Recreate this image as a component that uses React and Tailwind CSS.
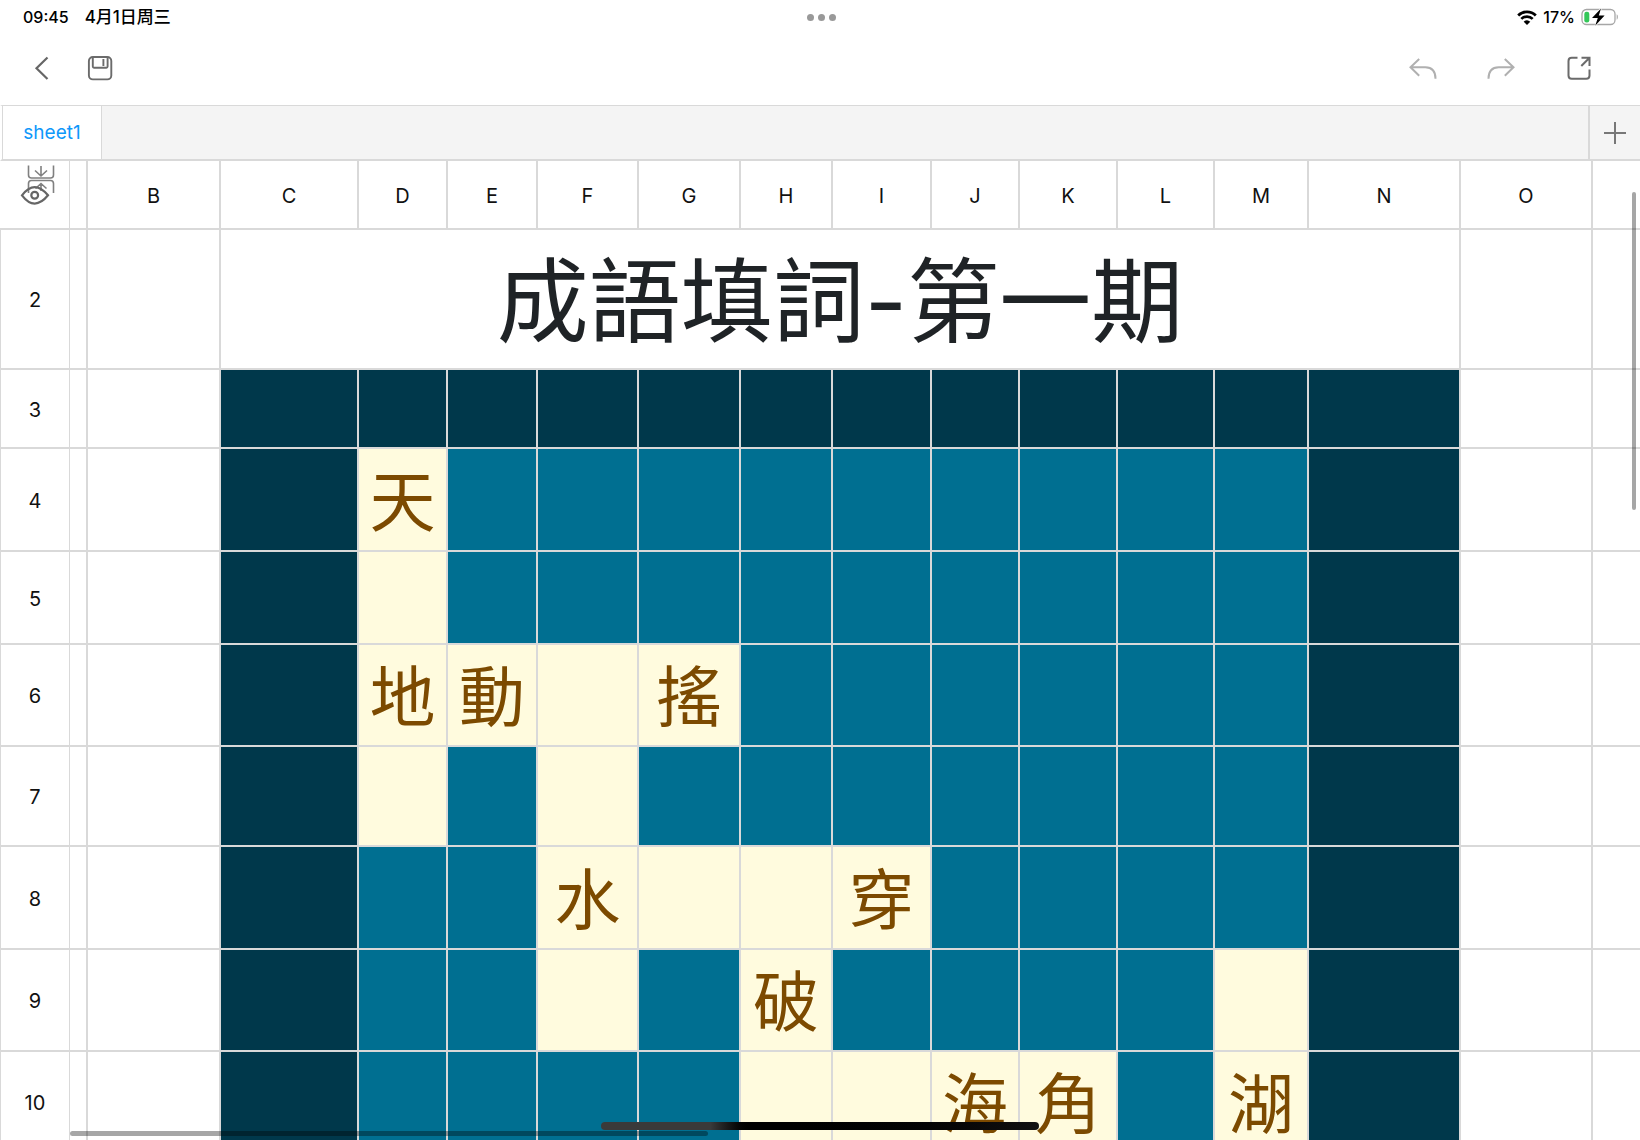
import React from "react";

const columns = [
  { name: "B", width: "w-[133px]" },
  { name: "C", width: "w-[138px]" },
  { name: "D", width: "w-[89px]" },
  { name: "E", width: "w-[90px]" },
  { name: "F", width: "w-[101px]" },
  { name: "G", width: "w-[102px]" },
  { name: "H", width: "w-[92px]" },
  { name: "I", width: "w-[99px]" },
  { name: "J", width: "w-[88px]" },
  { name: "K", width: "w-[98px]" },
  { name: "L", width: "w-[97px]" },
  { name: "M", width: "w-[94px]" },
  { name: "N", width: "w-[152px]" },
  { name: "O", width: "w-[132px]" },
];

// One entry per column C to N: "#" frame, "." board, "_" blank answer, any other character is a clue.
const rows = [
  { n: 3, height: "h-[79px]", cells: "############" },
  { n: 4, height: "h-[103px]", cells: "#天.........#" },
  { n: 5, height: "h-[93px]", cells: "#_.........#" },
  { n: 6, height: "h-[102px]", cells: "#地動_搖......#" },
  { n: 7, height: "h-[100px]", cells: "#_._.......#" },
  { n: 8, height: "h-[103px]", cells: "#..水__穿....#" },
  { n: 9, height: "h-[102px]", cells: "#.._.破...._#" },
  { n: 10, height: "h-[102px]", cells: "#....__海角.湖#" },
];

const frame = "border-b-2 border-[#d9d9d9] px-0 pb-0 pt-0.5";
const line = "border-r-2 border-b-2 border-[#d9d9d9] px-0 pb-0";

function fill(ch) {
  if (ch === "#") return "bg-[#00384b]";
  if (ch === ".") return "bg-[#006f91]";
  return "bg-[#fffbde]";
}

function StatusBar() {
  return (
    <div className="grid h-8 shrink-0 grid-cols-3 items-center pt-0.5 pr-[21px] pl-[23px] text-base font-medium text-black">
      <div className="flex items-center gap-4">
        <span>09:45</span>
        <span className="text-[17px] leading-6">4月1日周三</span>
      </div>
      <div className="flex justify-center gap-1">
        <span className="size-[7px] rounded-full bg-[#999]" />
        <span className="size-[7px] rounded-full bg-[#999]" />
        <span className="size-[7px] rounded-full bg-[#999]" />
      </div>
      <div className="flex items-center justify-end gap-1.5">
        <svg width="20" height="15" viewBox="0 0 20 15" fill="none" stroke="#000" aria-hidden="true">
          <path d="M1.2 5.4a12.6 12.6 0 0 1 17.6 0" strokeWidth="2.8" />
          <path d="M4.3 8.9a8.2 8.2 0 0 1 11.4 0" strokeWidth="2.7" />
          <path d="M10 15 6.7 11.7a4.8 4.8 0 0 1 6.6 0Z" fill="#000" stroke="none" />
        </svg>
        <span>17%</span>
        <svg width="38" height="18" viewBox="0 0 38 18" fill="none" aria-hidden="true">
          <rect x="1" y="1.5" width="33" height="15" rx="4.5" stroke="#a6a6a6" strokeWidth="1.3" />
          <path d="M35.7 6.3c1.6.9 1.6 4.5 0 5.4Z" fill="#a6a6a6" />
          <rect x="3.3" y="3.7" width="5" height="10.8" rx="2.2" fill="#34c759" />
          <path d="M20 .6 11 10h5.8l-2.6 7.8 9.4-10.2h-5.8Z" fill="#000" stroke="#fff" strokeWidth="1.4" paintOrder="stroke" />
        </svg>
      </div>
    </div>
  );
}

function Toolbar() {
  return (
    <div className="mb-px flex h-[72px] shrink-0 items-center justify-between pr-[46px] pl-7">
      <div className="flex gap-7">
        <button type="button" aria-label="返回">
          <svg width="30" height="30" viewBox="0 0 30 30" fill="none" stroke="#666" strokeWidth="2.2">
            <path d="M19.5 4.5 8.500 15.2l11 10.800" />
          </svg>
        </button>
        <button type="button" aria-label="保存">
          <svg width="30" height="30" viewBox="0 0 30 30" fill="none" stroke="#6b6b6b" strokeWidth="1.9">
            <rect x="2.9" y="4" width="22.4" height="22.4" rx="4" />
            <path d="M6.8 4v9.6q0 1.2 1.2 1.2h12.4q1.2 0 1.2-1.2V4M17.4 6v7" />
          </svg>
        </button>
      </div>
      <div className="flex gap-12">
        <button type="button" aria-label="撤销">
          <svg width="30" height="30" viewBox="0 0 30 30" fill="none" stroke="#b0b0b0" strokeWidth="2">
            <path d="M11.2 6 2.500 14.300l8.700 8.400M2.800 14.300h14.500c7 0 10.200 4 10.200 11.500" />
          </svg>
        </button>
        <button type="button" aria-label="重做">
          <svg width="30" height="30" viewBox="0 0 30 30" fill="none" stroke="#b0b0b0" strokeWidth="2">
            <path d="m18.800 6 8.700 8.300-8.700 8.400M27.200 14.300H12.700c-7 0-10.200 4-10.200 11.500" />
          </svg>
        </button>
        <button type="button" aria-label="分享">
          <svg width="30" height="30" viewBox="0 0 30 30" fill="none" stroke="#6b6b6b" strokeWidth="2">
            <path d="M13.500 4.800H7.700q-3.200 0-3.200 3.200v14.600q0 3.200 3.200 3.200h14.600q3.200 0 3.200-3.200v-6.200M17.500 4.800h8v8.200M17.300 13l8-8" />
          </svg>
        </button>
      </div>
    </div>
  );
}

function TabStrip() {
  return (
    <div className="flex h-14 shrink-0 border-t-1 border-b-2 border-l-2 border-[#d9d9d9] border-l-white bg-[#f4f4f4]">
      <button type="button" className="w-[100px] border-r border-l border-[#d9d9d9] bg-white pt-0.5 text-[19px] text-[#0f98fa]">
        sheet1
      </button>
      <div className="flex-1" />
      <button type="button" aria-label="新增工作表" className="flex w-[52px] items-center justify-center border-l-2 border-[#d9d9d9]">
        <svg width="24" height="24" viewBox="0 0 24 24" fill="none" stroke="#777" strokeWidth="2">
          <path d="M12 1v22M1 12h22" />
        </svg>
      </button>
    </div>
  );
}

function CornerIcon() {
  return (
    <svg className="block" width="68" height="66" viewBox="0 162 68 66" fill="none" aria-hidden="true">
      <g stroke="#808080" strokeWidth="1.6">
        <path d="M28.500 165.500V175q0 3 3 3h19q3 0 3-3v-9.500M41 166v9.500M35 170.500l6 5.500 6-5.500" />
        <path d="M28.500 193v-9.500q0-3 3-3h19q3 0 3 3V193M41 183.500V191M35.500 188.500l5.500-5 5.500 5" />
      </g>
      <path d="M22 195.300q12.500-16.500 26 0-13.500 16.500-26 0Z" stroke="#666" strokeWidth="2.2" />
      <circle cx="34.700" cy="195.300" r="3.400" stroke="#666" strokeWidth="2.2" />
    </svg>
  );
}

function Sheet() {
  return (
    <table className="w-full table-fixed border-separate border-spacing-0 text-xl text-[#111]">
      <colgroup>
        <col className="w-[70px]" />
        <col className="w-[18px]" />
        {columns.map((c) => (
          <col key={c.name} className={c.width} />
        ))}
        <col />
      </colgroup>
      <thead>
        <tr className="h-[69px]">
          <th className="border-r border-b-2 border-[#d9d9d9] p-0">
            <CornerIcon />
          </th>
          <th className={line} />
          {columns.map((c) => (
            <th key={c.name} scope="col" className={`${line} pt-0.5 font-normal`}>
              {c.name}
            </th>
          ))}
          <th className={frame} />
        </tr>
      </thead>
      <tbody>
        <tr className="h-[140px]">
          <th scope="row" className={`${frame} border-r border-l font-normal`}>2</th>
          <td className={line} />
          <td className={line} />
          <td colSpan={12} className={`${line} pt-1.5 text-center text-[92px] leading-[92px] text-[#1f2326]`}>
            成語填詞-第一期
          </td>
          <td className={line} />
          <td className={frame} />
        </tr>
        {rows.map((r) => (
          <tr key={r.n} className={r.height}>
            <th scope="row" className={`${frame} border-r border-l font-normal`}>{r.n}</th>
            <td className={line} />
            <td className={line} />
            {[...r.cells].map((ch, i) => (
              <td
                key={i}
                className={`${line} ${fill(ch)} pt-1 text-center text-[66px] leading-[66px] text-[#7c4a00]`}
              >
                {"#._".includes(ch) ? null : ch}
              </td>
            ))}
            <td className={line} />
            <td className={frame} />
          </tr>
        ))}
      </tbody>
    </table>
  );
}

export default function App() {
  return (
    <div
      lang="zh-Hant"
      className="relative flex h-screen flex-col overflow-hidden bg-white font-['Inter','Noto_Sans_CJK_TC',sans-serif]"
    >
      <StatusBar />
      <Toolbar />
      <TabStrip />
      <main className="min-h-0 flex-1 overflow-hidden">
        <Sheet />
      </main>
      <div className="absolute top-48 right-1 h-[318px] w-1 rounded-full bg-black/35" />
      <div className="absolute bottom-1 left-[70px] h-[5px] w-[638px] rounded-full bg-black/35" />
      <div className="absolute bottom-2.5 left-1/2 h-2 w-[438px] -translate-x-1/2 rounded-full bg-linear-to-r from-[#3a3a3a] from-25% via-black via-35% to-[#111]" />
    </div>
  );
}
